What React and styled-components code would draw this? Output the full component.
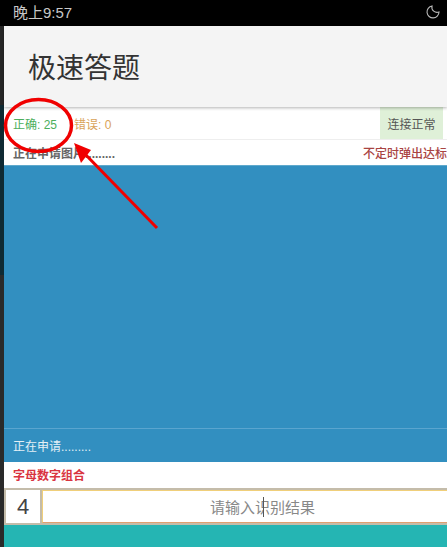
import React from "react";
import styled, { createGlobalStyle } from "styled-components";

const GlobalStyle = createGlobalStyle`
  html, body {
    margin: 0;
    padding: 0;
    background: #222;
  }
  * {
    box-sizing: border-box;
  }
`;

const Page = styled.div`
  position: relative;
  width: 447px;
  height: 547px;
  overflow: hidden;
  font-family: "Liberation Sans", "Noto Sans CJK SC", sans-serif;
  display: flex;
  flex-direction: column;
  background: linear-gradient(#262626 0 105px, #0f2a33 105px 275px, #2a2a2a 275px);
`;

const StatusBar = styled.div`
  height: 26px;
  flex: none;
  background: #000;
  color: #c8c8c8;
  display: flex;
  align-items: center;
  justify-content: space-between;
  padding: 0 6px 3px 13px;
  font-size: 15px;
`;

const Content = styled.div`
  flex: 1;
  margin-left: 4px;
  display: flex;
  flex-direction: column;
  min-height: 0;
  background: #fff;
`;

const Header = styled.div`
  height: 81px;
  flex: none;
  background: #f4f4f4;
  display: flex;
  align-items: center;
  padding: 0 0 2px 24px;
  font-size: 28px;
  color: #333;
  box-shadow: 0 1px 3px rgba(0, 0, 0, 0.3);
  position: relative;
  z-index: 1;
`;

const ScoreRow = styled.div`
  height: 33px;
  flex: none;
  display: flex;
  align-items: center;
  font-size: 12px;
  padding-left: 9px;
  border-bottom: 1px solid #eee;
`;

const Score = styled.span`
  color: ${(p) => p.$color};
  margin-right: ${(p) => p.$gap}px;
`;

const Connection = styled.div`
  margin-left: auto;
  margin-right: 4px;
  width: 63px;
  height: 100%;
  background: #dff0d8;
  color: #555;
  display: flex;
  align-items: center;
  justify-content: center;
  white-space: nowrap;
`;

const NoticeRow = styled.div`
  height: 25px;
  flex: none;
  display: flex;
  align-items: center;
  justify-content: space-between;
  font-size: 12px;
  padding-left: 9px;
  white-space: nowrap;
`;

const NoticeLeft = styled.span`
  color: #666;
  font-weight: 700;
`;

const NoticeRight = styled.span`
  color: #a94442;
  font-weight: 500;
`;

const ImagePanel = styled.div`
  height: 297px;
  flex: none;
  background: #328fc0;
  border-top: 1px solid #5fa9cc;
  display: flex;
  flex-direction: column;
  justify-content: flex-end;
`;

const PanelCaption = styled.div`
  height: 34px;
  border-top: 1px solid #5aa5cf;
  color: #e4f0f6;
  font-size: 12px;
  padding-left: 9px;
  display: flex;
  align-items: center;
`;

const TypeLabel = styled.div`
  height: 26px;
  flex: none;
  color: #d9343f;
  font-size: 12px;
  font-weight: 700;
  padding: 0 0 1px 9px;
  display: flex;
  align-items: center;
`;

const AnswerRow = styled.div`
  height: 37px;
  flex: none;
  display: flex;
  gap: 2px;
  background: #c4bcaa;
  padding: 2px 0;
`;

const Digit = styled.div`
  width: 34px;
  margin-left: 2px;
  background: #fff;
  color: #444;
  font-size: 22px;
  display: flex;
  align-items: center;
  justify-content: center;
`;

const AnswerInput = styled.div`
  flex: 1;
  background: #fff;
  border: 1px solid #f0cf7a;
  border-bottom-color: #e0a070;
  border-right: none;
  color: #888;
  font-size: 15px;
  display: flex;
  align-items: center;
  justify-content: center;
  padding-left: 35px;
  position: relative;
`;

const Caret = styled.span`
  position: absolute;
  left: 220px;
  top: 6px;
  width: 1px;
  height: 20px;
  background: #555;
`;

const Footer = styled.div`
  flex: 1;
  background: #25b5b3;
`;

const Annotation = styled.svg`
  position: absolute;
  left: 0;
  top: 0;
  pointer-events: none;
  z-index: 5;
`;

const MoonSvg = styled.svg`
  display: block;
`;

function MoonIcon() {
  return (
    <MoonSvg width="15" height="15" viewBox="0 0 15 15" fill="none" stroke="#b8b8b8" strokeWidth="1.1">
      <path d="M6 2 A6 6 0 1 0 13 8 A5.2 5.2 0 0 1 6 2 Z" />
    </MoonSvg>
  );
}

export default function App() {
  return (
    <Page>
      <GlobalStyle />
      <StatusBar>
        <span>晚上9:57</span>
        <MoonIcon />
      </StatusBar>
      <Content>
        <Header>极速答题</Header>
        <ScoreRow>
          <Score $color="#4cae5c" $gap={17}>正确: 25</Score>
          <Score $color="#d9a35a" $gap={0}>错误: 0</Score>
          <Connection>连接正常</Connection>
        </ScoreRow>
        <NoticeRow>
          <NoticeLeft>正在申请图片.........</NoticeLeft>
          <NoticeRight>不定时弹出达标</NoticeRight>
        </NoticeRow>
        <ImagePanel>
          <PanelCaption>正在申请.........</PanelCaption>
        </ImagePanel>
        <TypeLabel>字母数字组合</TypeLabel>
        <AnswerRow>
          <Digit>4</Digit>
          <AnswerInput>
            请输入识别结果
            <Caret />
          </AnswerInput>
        </AnswerRow>
        <Footer />
      </Content>
      <Annotation width="447" height="547" viewBox="0 0 447 547">
        <ellipse cx="38.5" cy="125.5" rx="33" ry="26" fill="none" stroke="#f00000" strokeWidth="3.5" />
        <line x1="157" y1="228" x2="84" y2="153" stroke="#f00000" strokeWidth="3" />
        <polygon points="74,143 91,150 81,163" fill="#f00000" />
      </Annotation>
    </Page>
  );
}
